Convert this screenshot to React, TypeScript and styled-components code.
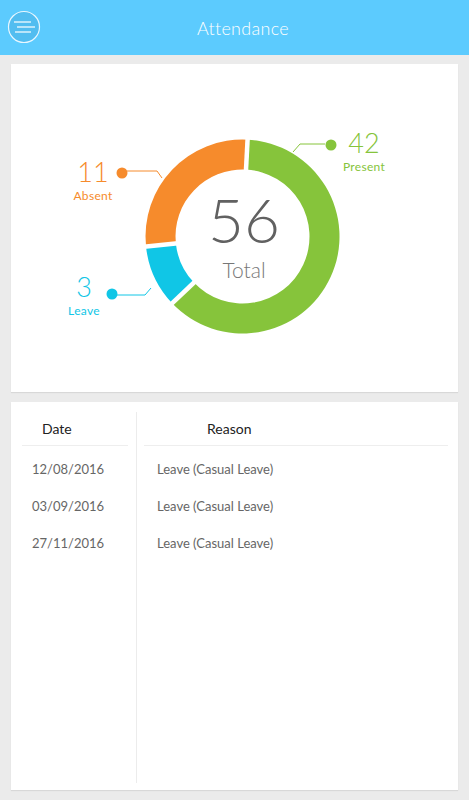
import { createGlobalStyle, styled } from "styled-components";

const GlobalStyle = createGlobalStyle`
  html, body {
    margin: 0;
    padding: 0;
    background: #ebebeb;
    font-family: Lato, "Open Sans", sans-serif;
  }
`;

const GREEN = "#86c43b";
const ORANGE = "#f68b2c";
const CYAN = "#10c6e6";

const Page = styled.div`
  width: 469px;
  height: 800px;
  display: flex;
  flex-direction: column;
  background: #ebebeb;
`;

const TopBar = styled.header`
  height: 55px;
  flex-shrink: 0;
  background: #5ccbfe;
  display: flex;
  align-items: center;
  padding: 0 0 0 7px;
  box-sizing: border-box;
`;

const MenuButton = styled.div`
  width: 34px;
  height: 34px;
  margin-top: -2px;
  flex-shrink: 0;
`;

const TopTitle = styled.h1`
  flex: 1;
  margin: 0;
  padding-right: 24px;
  text-align: center;
  color: #fff;
  font-size: 18px;
  font-weight: 300;
  letter-spacing: 0.3px;
`;

const Content = styled.main`
  flex: 1;
  display: flex;
  flex-direction: column;
  gap: 10px;
  padding: 9px 11px 10px;
  min-height: 0;
`;

const Card = styled.section`
  background: #fff;
  box-shadow: 0 1px 1px rgba(0, 0, 0, 0.08);
`;

const ChartCard = styled(Card)`
  height: 328px;
  flex-shrink: 0;
  position: relative;
`;

const ChartSvg = styled.svg`
  position: absolute;
  inset: 0;
`;

const Label = styled.div<{ $x: number; $y: number; $color: string }>`
  position: absolute;
  left: ${(p) => p.$x}px;
  top: ${(p) => p.$y}px;
  transform: translateX(-50%);
  display: flex;
  flex-direction: column;
  align-items: center;
  color: ${(p) => p.$color};
`;

const LabelValue = styled.span`
  font-size: 27px;
  line-height: 1.2;
  font-weight: 300;
`;

const LabelName = styled.span`
  margin-top: 1px;
  font-size: 12px;
  line-height: 1.2;
  font-weight: 400;
  letter-spacing: 0.3px;
`;

const CenterValue = styled.span`
  font-size: 62px;
  line-height: 1.2;
  font-weight: 300;
  color: #616161;
`;

const CenterName = styled.span`
  margin-top: 1px;
  font-size: 21px;
  line-height: 1.2;
  font-weight: 300;
  color: #777;
`;

const TableCard = styled(Card)`
  flex: 1;
  display: flex;
  padding: 10px 10px 7px 0;
  min-height: 0;
`;

const Column = styled.div<{ $width?: number }>`
  ${(p) => (p.$width ? `width: ${p.$width}px; flex-shrink: 0;` : "flex: 1;")}
  box-sizing: border-box;
`;

const DateColumn = styled(Column)`
  padding: 0 8px 0 11px;
  border-right: 1px solid #ececec;
`;

const ReasonColumn = styled(Column)`
  padding-left: 7px;
`;

const HeadCell = styled.div<{ $pad: number }>`
  height: 33px;
  display: flex;
  align-items: center;
  padding-left: ${(p) => p.$pad}px;
  border-bottom: 1px solid #eeeeee;
  font-size: 14px;
  color: #222;
`;

const Rows = styled.div`
  padding-top: 4px;
`;

const Cell = styled.div<{ $pad: number }>`
  height: 37px;
  display: flex;
  align-items: center;
  padding-left: ${(p) => p.$pad}px;
  font-size: 13px;
  color: #666;
`;

const CX = 231.5;
const CY = 172.5;
const R_OUT = 97;
const R_IN = 67;

const pt = (r: number, deg: number) => {
  const a = (deg * Math.PI) / 180;
  return [CX + r * Math.sin(a), CY - r * Math.cos(a)];
};

const sector = (from: number, to: number) => {
  const large = to - from > 180 ? 1 : 0;
  const [x1, y1] = pt(R_OUT, from);
  const [x2, y2] = pt(R_OUT, to);
  const [x3, y3] = pt(R_IN, to);
  const [x4, y4] = pt(R_IN, from);
  return `M${x1} ${y1} A${R_OUT} ${R_OUT} 0 ${large} 1 ${x2} ${y2} L${x3} ${y3} A${R_IN} ${R_IN} 0 ${large} 0 ${x4} ${y4} Z`;
};

const segments = [
  { from: 3, to: 226.5, color: GREEN },
  { from: 226.5, to: 264, color: CYAN },
  { from: 264, to: 363, color: ORANGE },
];

const gaps = [3, 226.5, 264];

const leaders = [
  { line: "282,88 289,80 314,80", dot: [320, 81], color: GREEN },
  { line: "116,107 146,107 151,114", dot: [111, 109], color: ORANGE },
  { line: "106,231 134,231 140,224", dot: [101, 230], color: CYAN },
];

const labels = [
  { value: "42", name: "Present", x: 364, y: 62.5, color: GREEN },
  { value: "11", name: "Absent", x: 93, y: 92, color: ORANGE },
  { value: "3", name: "Leave", x: 84, y: 207, color: CYAN },
];

const leaves = [
  { date: "12/08/2016", reason: "Leave (Casual Leave)" },
  { date: "03/09/2016", reason: "Leave (Casual Leave)" },
  { date: "27/11/2016", reason: "Leave (Casual Leave)" },
];

const MenuIcon = () => (
  <svg width="34" height="34" viewBox="0 0 34 34">
    <circle cx="17" cy="17" r="15.5" fill="#52bdf0" stroke="#e8f7ff" strokeWidth="1.2" />
    <line x1="7" y1="12" x2="24" y2="12" stroke="#fff" strokeWidth="1.2" />
    <line x1="10" y1="17" x2="28" y2="17" stroke="#fff" strokeWidth="1.2" />
    <line x1="8" y1="22" x2="24" y2="22" stroke="#fff" strokeWidth="1.2" />
  </svg>
);

const App = () => {
  return (
    <Page>
      <GlobalStyle />
      <TopBar>
        <MenuButton>
          <MenuIcon />
        </MenuButton>
        <TopTitle>Attendance</TopTitle>
      </TopBar>
      <Content>
        <ChartCard>
          <ChartSvg width="447" height="328" viewBox="0 0 447 328">
            {segments.map((s) => (
              <path key={s.from} d={sector(s.from, s.to)} fill={s.color} />
            ))}
            {gaps.map((g) => {
              const [x1, y1] = pt(R_IN - 2, g);
              const [x2, y2] = pt(R_OUT + 2, g);
              return (
                <line key={g} x1={x1} y1={y1} x2={x2} y2={y2} stroke="#fff" strokeWidth="4.5" />
              );
            })}
            {leaders.map((l) => (
              <g key={l.line}>
                <polyline points={l.line} fill="none" stroke={l.color} strokeWidth="1" />
                <circle cx={l.dot[0]} cy={l.dot[1]} r="5.5" fill={l.color} />
              </g>
            ))}
          </ChartSvg>
          {labels.map((l) => (
            <Label key={l.name} $x={l.x - 11} $y={l.y} $color={l.color}>
              <LabelValue>{l.value}</LabelValue>
              <LabelName>{l.name}</LabelName>
            </Label>
          ))}
          <Label $x={233} $y={118} $color="#616161">
            <CenterValue>56</CenterValue>
            <CenterName>Total</CenterName>
          </Label>
        </ChartCard>
        <TableCard>
          <DateColumn $width={126}>
            <HeadCell $pad={20}>Date</HeadCell>
            <Rows>
              {leaves.map((row) => (
                <Cell key={row.date} $pad={10}>
                  {row.date}
                </Cell>
              ))}
            </Rows>
          </DateColumn>
          <ReasonColumn>
            <HeadCell $pad={63}>Reason</HeadCell>
            <Rows>
              {leaves.map((row) => (
                <Cell key={row.date} $pad={13}>
                  {row.reason}
                </Cell>
              ))}
            </Rows>
          </ReasonColumn>
        </TableCard>
      </Content>
    </Page>
  );
};

export default App;
